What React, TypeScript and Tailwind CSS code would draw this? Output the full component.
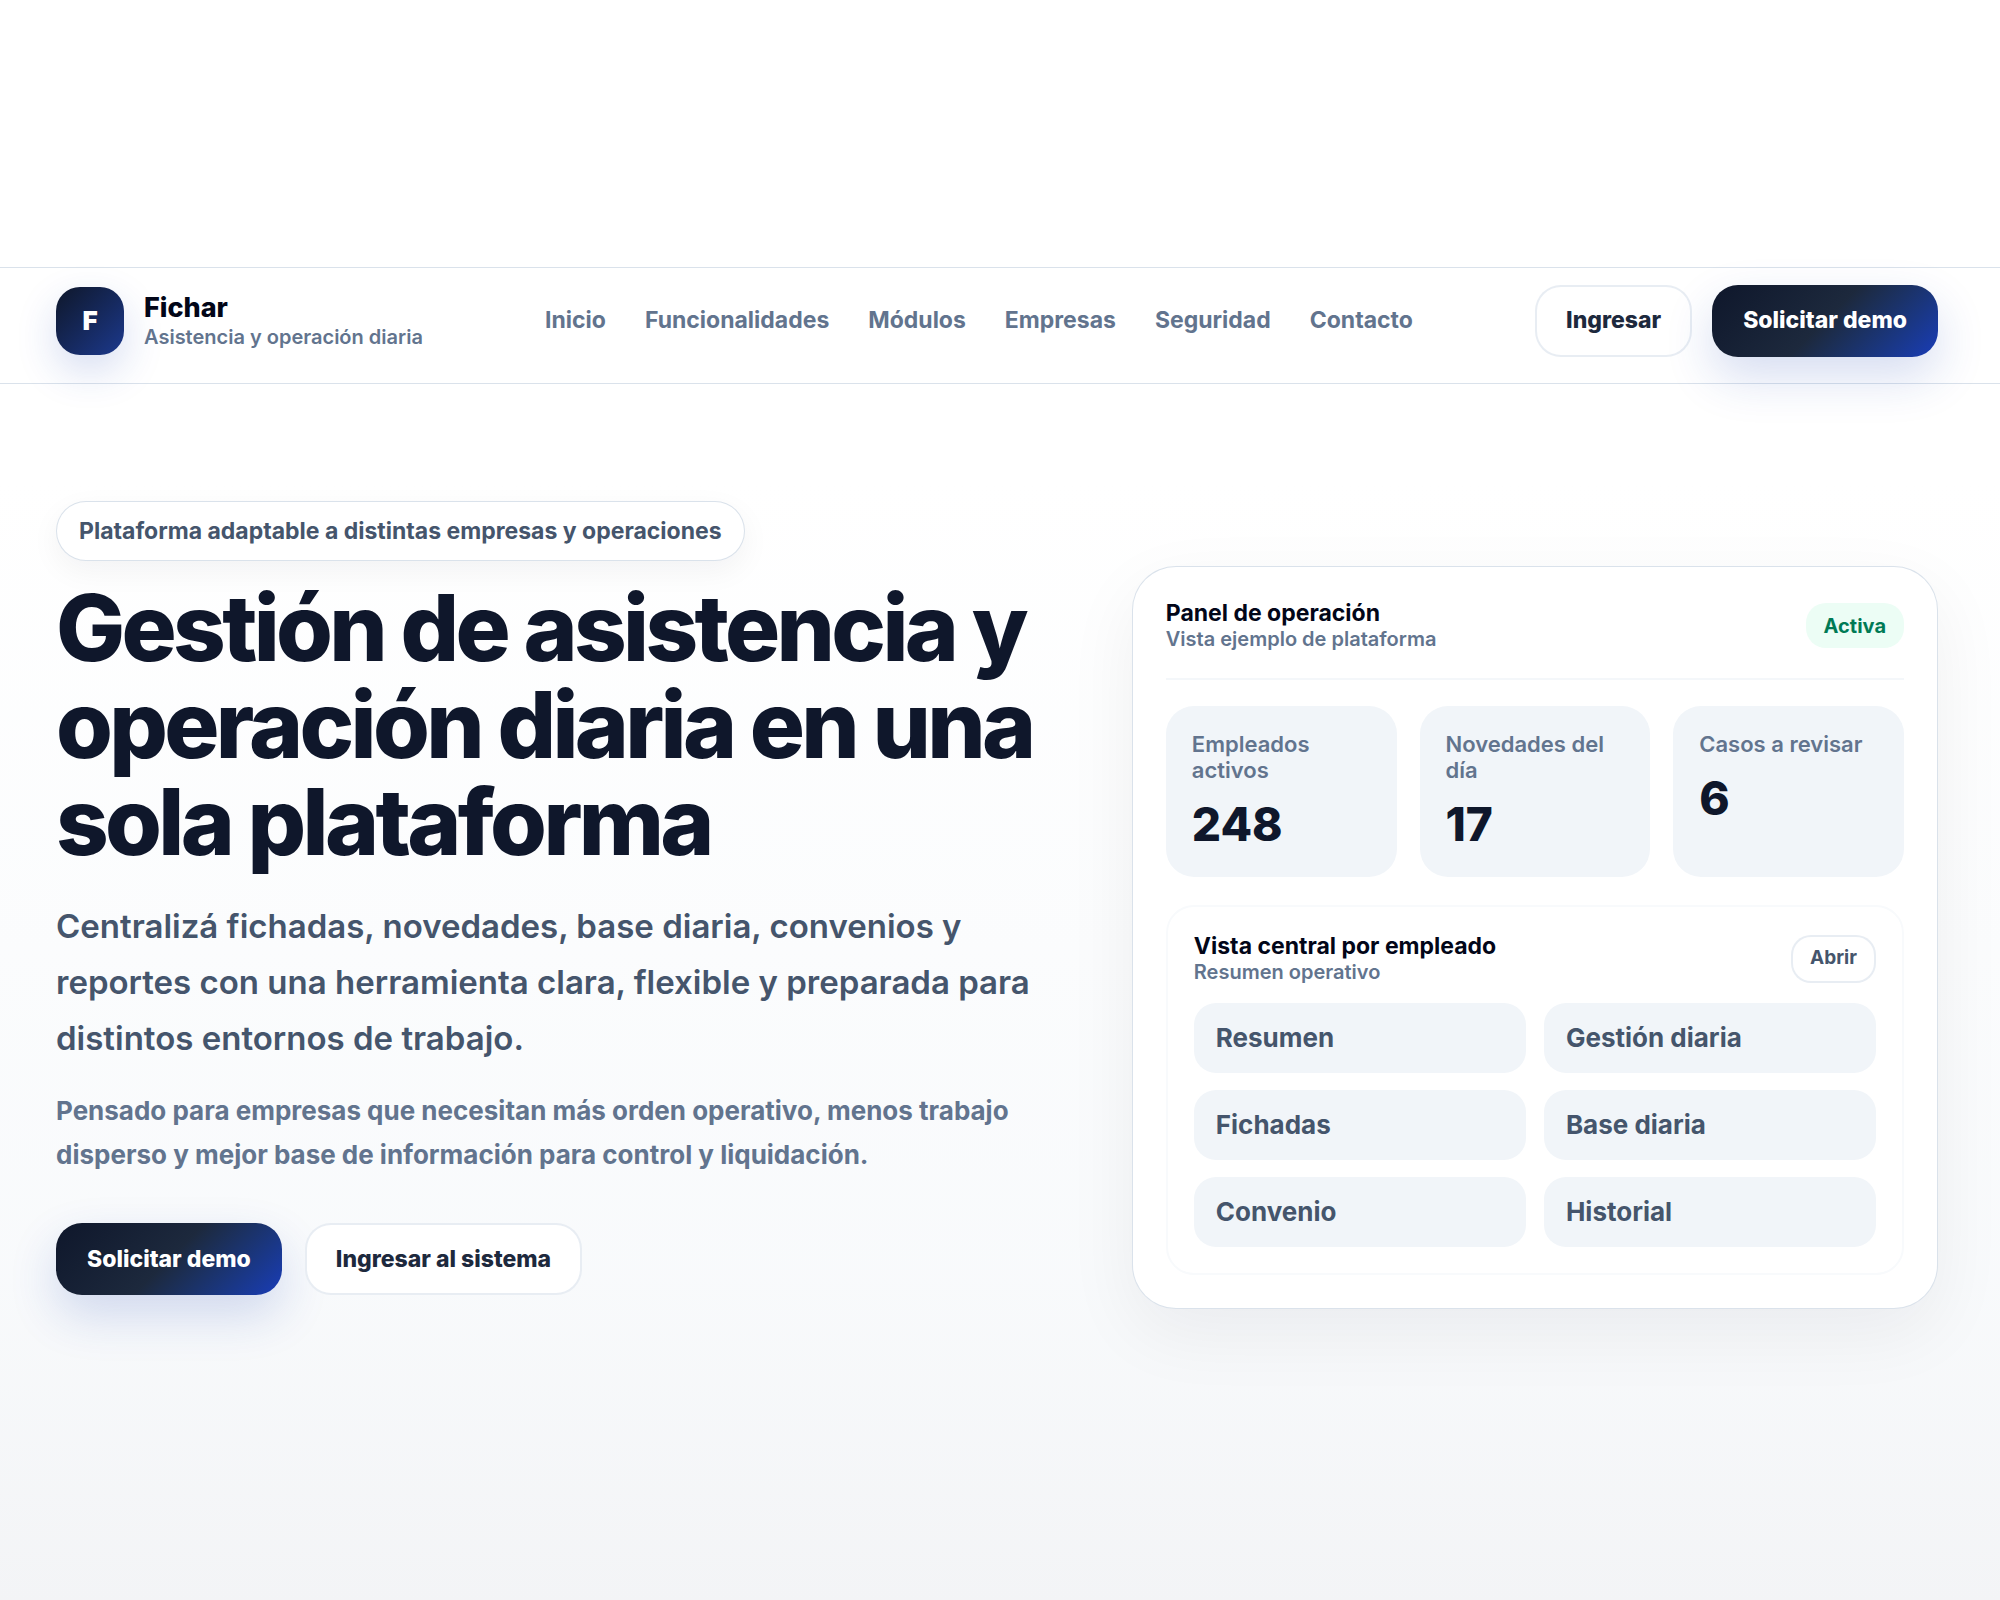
import clsx from "clsx";
import type { ReactNode } from "react";

const navLinks = [
  { label: "Inicio", href: "#inicio" },
  { label: "Funcionalidades", href: "#funcionalidades" },
  { label: "Módulos", href: "#modulos" },
  { label: "Empresas", href: "#empresas" },
  { label: "Seguridad", href: "#seguridad" },
  { label: "Contacto", href: "#contacto" },
];

const stats = [
  { label: "Empleados activos", value: "248" },
  { label: "Novedades del día", value: "17" },
  { label: "Casos a revisar", value: "6" },
];

const sections = [
  "Resumen",
  "Gestión diaria",
  "Fichadas",
  "Base diaria",
  "Convenio",
  "Historial",
];

function ButtonLink({
  href,
  primary,
  children,
}: {
  href: string;
  primary?: boolean;
  children: ReactNode;
}) {
  return (
    <a
      href={href}
      className={clsx(
        "flex h-18 items-center rounded-[26px] border-2 px-[29px] text-[23px] font-extrabold whitespace-nowrap",
        primary
          ? "border-transparent bg-linear-135 from-slate-900 via-slate-800 to-blue-800 bg-origin-border text-white shadow-[0_20px_48px_rgba(30,64,175,0.18)]"
          : "border-slate-200/80 bg-white text-slate-800",
      )}
    >
      {children}
    </a>
  );
}

function Header() {
  return (
    <header className="border-y border-slate-300/70 bg-white/80">
      <div className="flex h-[115px] items-center justify-between pr-[62px] pb-2.5 pl-14">
        <a href="#inicio" className="flex items-center gap-5">
          <span className="flex size-[68px] items-center justify-center rounded-3xl bg-linear-135 from-slate-900 to-blue-900 text-[26px] font-black text-white shadow-[0_16px_40px_rgba(30,64,175,0.18)]">
            F
          </span>
          <span className="flex flex-col">
            <span className="text-[27px] leading-8 font-extrabold text-slate-950">
              Fichar
            </span>
            <span className="text-xl leading-[26px] font-semibold text-slate-500">
              Asistencia y operación diaria
            </span>
          </span>
        </a>
        <nav className="flex gap-[39px] text-[23px] font-bold text-slate-500">
          {navLinks.map((link) => (
            <a key={link.href} href={link.href}>
              {link.label}
            </a>
          ))}
        </nav>
        <div className="flex gap-5">
          <ButtonLink href="#ingresar">Ingresar</ButtonLink>
          <ButtonLink href="#demo" primary>
            Solicitar demo
          </ButtonLink>
        </div>
      </div>
    </header>
  );
}

function Intro() {
  return (
    <div className="pb-[78px]">
      <p className="flex h-15 w-fit items-center rounded-full border border-slate-300/70 bg-white px-[22px] text-[23px] font-bold text-slate-600 shadow-[0_10px_30px_rgba(15,23,42,0.05)]">
        Plataforma adaptable a distintas empresas y operaciones
      </p>
      <h1 className="mt-[18px] text-[92px] leading-[97px] font-extrabold tracking-[-0.04em] text-slate-900">
        Gestión de asistencia y operación diaria en una sola plataforma
      </h1>
      <p className="mt-7 text-[33px] leading-[56px] font-semibold text-slate-600">
        Centralizá fichadas, novedades, base diaria, convenios y reportes con
        una herramienta clara, flexible y preparada para distintos entornos de
        trabajo.
      </p>
      <p className="mt-[23px] text-[26px] leading-[44px] font-bold text-slate-500">
        Pensado para empresas que necesitan más orden operativo, menos trabajo
        disperso y mejor base de información para control y liquidación.
      </p>
      <div className="mt-[46px] flex gap-[23px]">
        <ButtonLink href="#demo" primary>
          Solicitar demo
        </ButtonLink>
        <ButtonLink href="#ingresar">Ingresar al sistema</ButtonLink>
      </div>
    </div>
  );
}

function EmployeeView() {
  return (
    <section className="mt-7 rounded-[28px] border-2 border-slate-50 px-[26px] py-[26px]">
      <div className="flex items-center justify-between">
        <div>
          <h3 className="text-[23px] leading-[26px] font-bold text-slate-950">
            Vista central por empleado
          </h3>
          <p className="text-xl leading-[26px] font-semibold text-slate-500">
            Resumen operativo
          </p>
        </div>
        <button
          type="button"
          className="h-12 rounded-[20px] border-2 border-slate-200/80 bg-white px-[17px] text-[19px] font-bold text-slate-600"
        >
          Abrir
        </button>
      </div>
      <ul className="mt-[18px] grid grid-cols-2 gap-x-[18px] gap-y-[17px]">
        {sections.map((section) => (
          <li
            key={section}
            className="flex h-[70px] items-center rounded-[22px] bg-slate-100 px-[22px] text-[26px] font-bold text-slate-600"
          >
            {section}
          </li>
        ))}
      </ul>
    </section>
  );
}

function OperationPanel() {
  return (
    <section className="rounded-[44px] border border-slate-300/70 bg-white p-[33px] shadow-[0_24px_72px_rgba(15,23,42,0.06)]">
      <div className="flex items-center justify-between border-b-2 border-slate-100/80 pb-[26px]">
        <div>
          <h2 className="text-[23px] leading-[26px] font-bold text-slate-950">
            Panel de operación
          </h2>
          <p className="text-xl leading-[26px] font-semibold text-slate-500">
            Vista ejemplo de plataforma
          </p>
        </div>
        <span className="flex h-[45px] items-center rounded-[20px] bg-emerald-50 px-[18px] text-xl font-bold text-emerald-700">
          Activa
        </span>
      </div>
      <dl className="mt-[26px] grid grid-cols-3 gap-[23px]">
        {stats.map((stat) => (
          <div
            key={stat.label}
            className="rounded-[28px] bg-slate-100 px-[26px] py-[25px]"
          >
            <dt className="text-[22px] leading-[26px] font-semibold text-slate-500">
              {stat.label}
            </dt>
            <dd className="mt-[13px] text-[46px] leading-[56px] font-extrabold text-slate-900">
              {stat.value}
            </dd>
          </div>
        ))}
      </dl>
      <EmployeeView />
    </section>
  );
}

export default function App() {
  return (
    <div className="min-h-screen bg-linear-to-b from-white from-30% via-slate-50 via-80% to-gray-100 pt-[267px] font-['Inter',sans-serif]">
      <Header />
      <main className="grid grid-cols-[1.265fr_1fr] items-center gap-14 pt-[117px] pr-[62px] pb-20 pl-14">
        <Intro />
        <OperationPanel />
      </main>
    </div>
  );
}
